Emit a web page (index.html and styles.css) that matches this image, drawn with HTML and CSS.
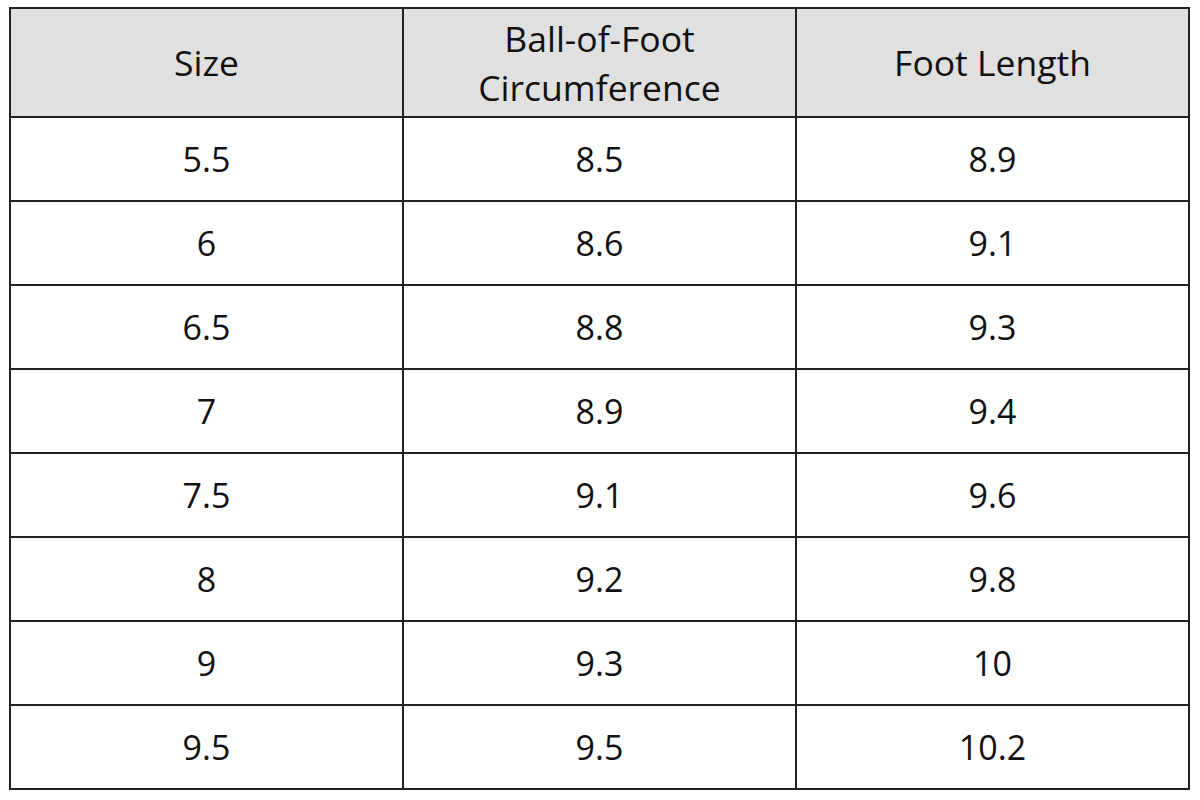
FILE: index.html
```html
<!DOCTYPE html>
<html>
<head>
<meta charset="utf-8">
<link rel="stylesheet" href="styles.css">
</head>
<body>
<table class="chart">
  <thead>
    <tr><th>Size</th><th>Ball-of-Foot<br>Circumference</th><th>Foot Length</th></tr>
  </thead>
  <tbody>
    <tr><td>5.5</td><td>8.5</td><td>8.9</td></tr>
    <tr><td>6</td><td>8.6</td><td>9.1</td></tr>
    <tr><td>6.5</td><td>8.8</td><td>9.3</td></tr>
    <tr><td>7</td><td>8.9</td><td>9.4</td></tr>
    <tr><td>7.5</td><td>9.1</td><td>9.6</td></tr>
    <tr><td>8</td><td>9.2</td><td>9.8</td></tr>
    <tr><td>9</td><td>9.3</td><td>10</td></tr>
    <tr><td>9.5</td><td>9.5</td><td>10.2</td></tr>
  </tbody>
</table>
</body>
</html>
```
FILE: styles.css
```css
html, body { margin: 0; padding: 0; background: #fff; }
body { padding: 7px 0 0 9px; }
.chart {
  border-collapse: collapse;
  width: 1181px;
  table-layout: fixed;
  color: #111;
}
.chart th, .chart td {
  border: 2px solid #222;
  text-align: center;
  vertical-align: middle;
  padding: 0;
  font-family: "Open Sans", sans-serif;
  font-weight: 400;
}
.chart th {
  background: #e0e0e0;
  font-size: 35.5px;
  line-height: 49px;
  height: 107px;
}
.chart td {
  font-size: 34px;
  height: 82px;
}
```
